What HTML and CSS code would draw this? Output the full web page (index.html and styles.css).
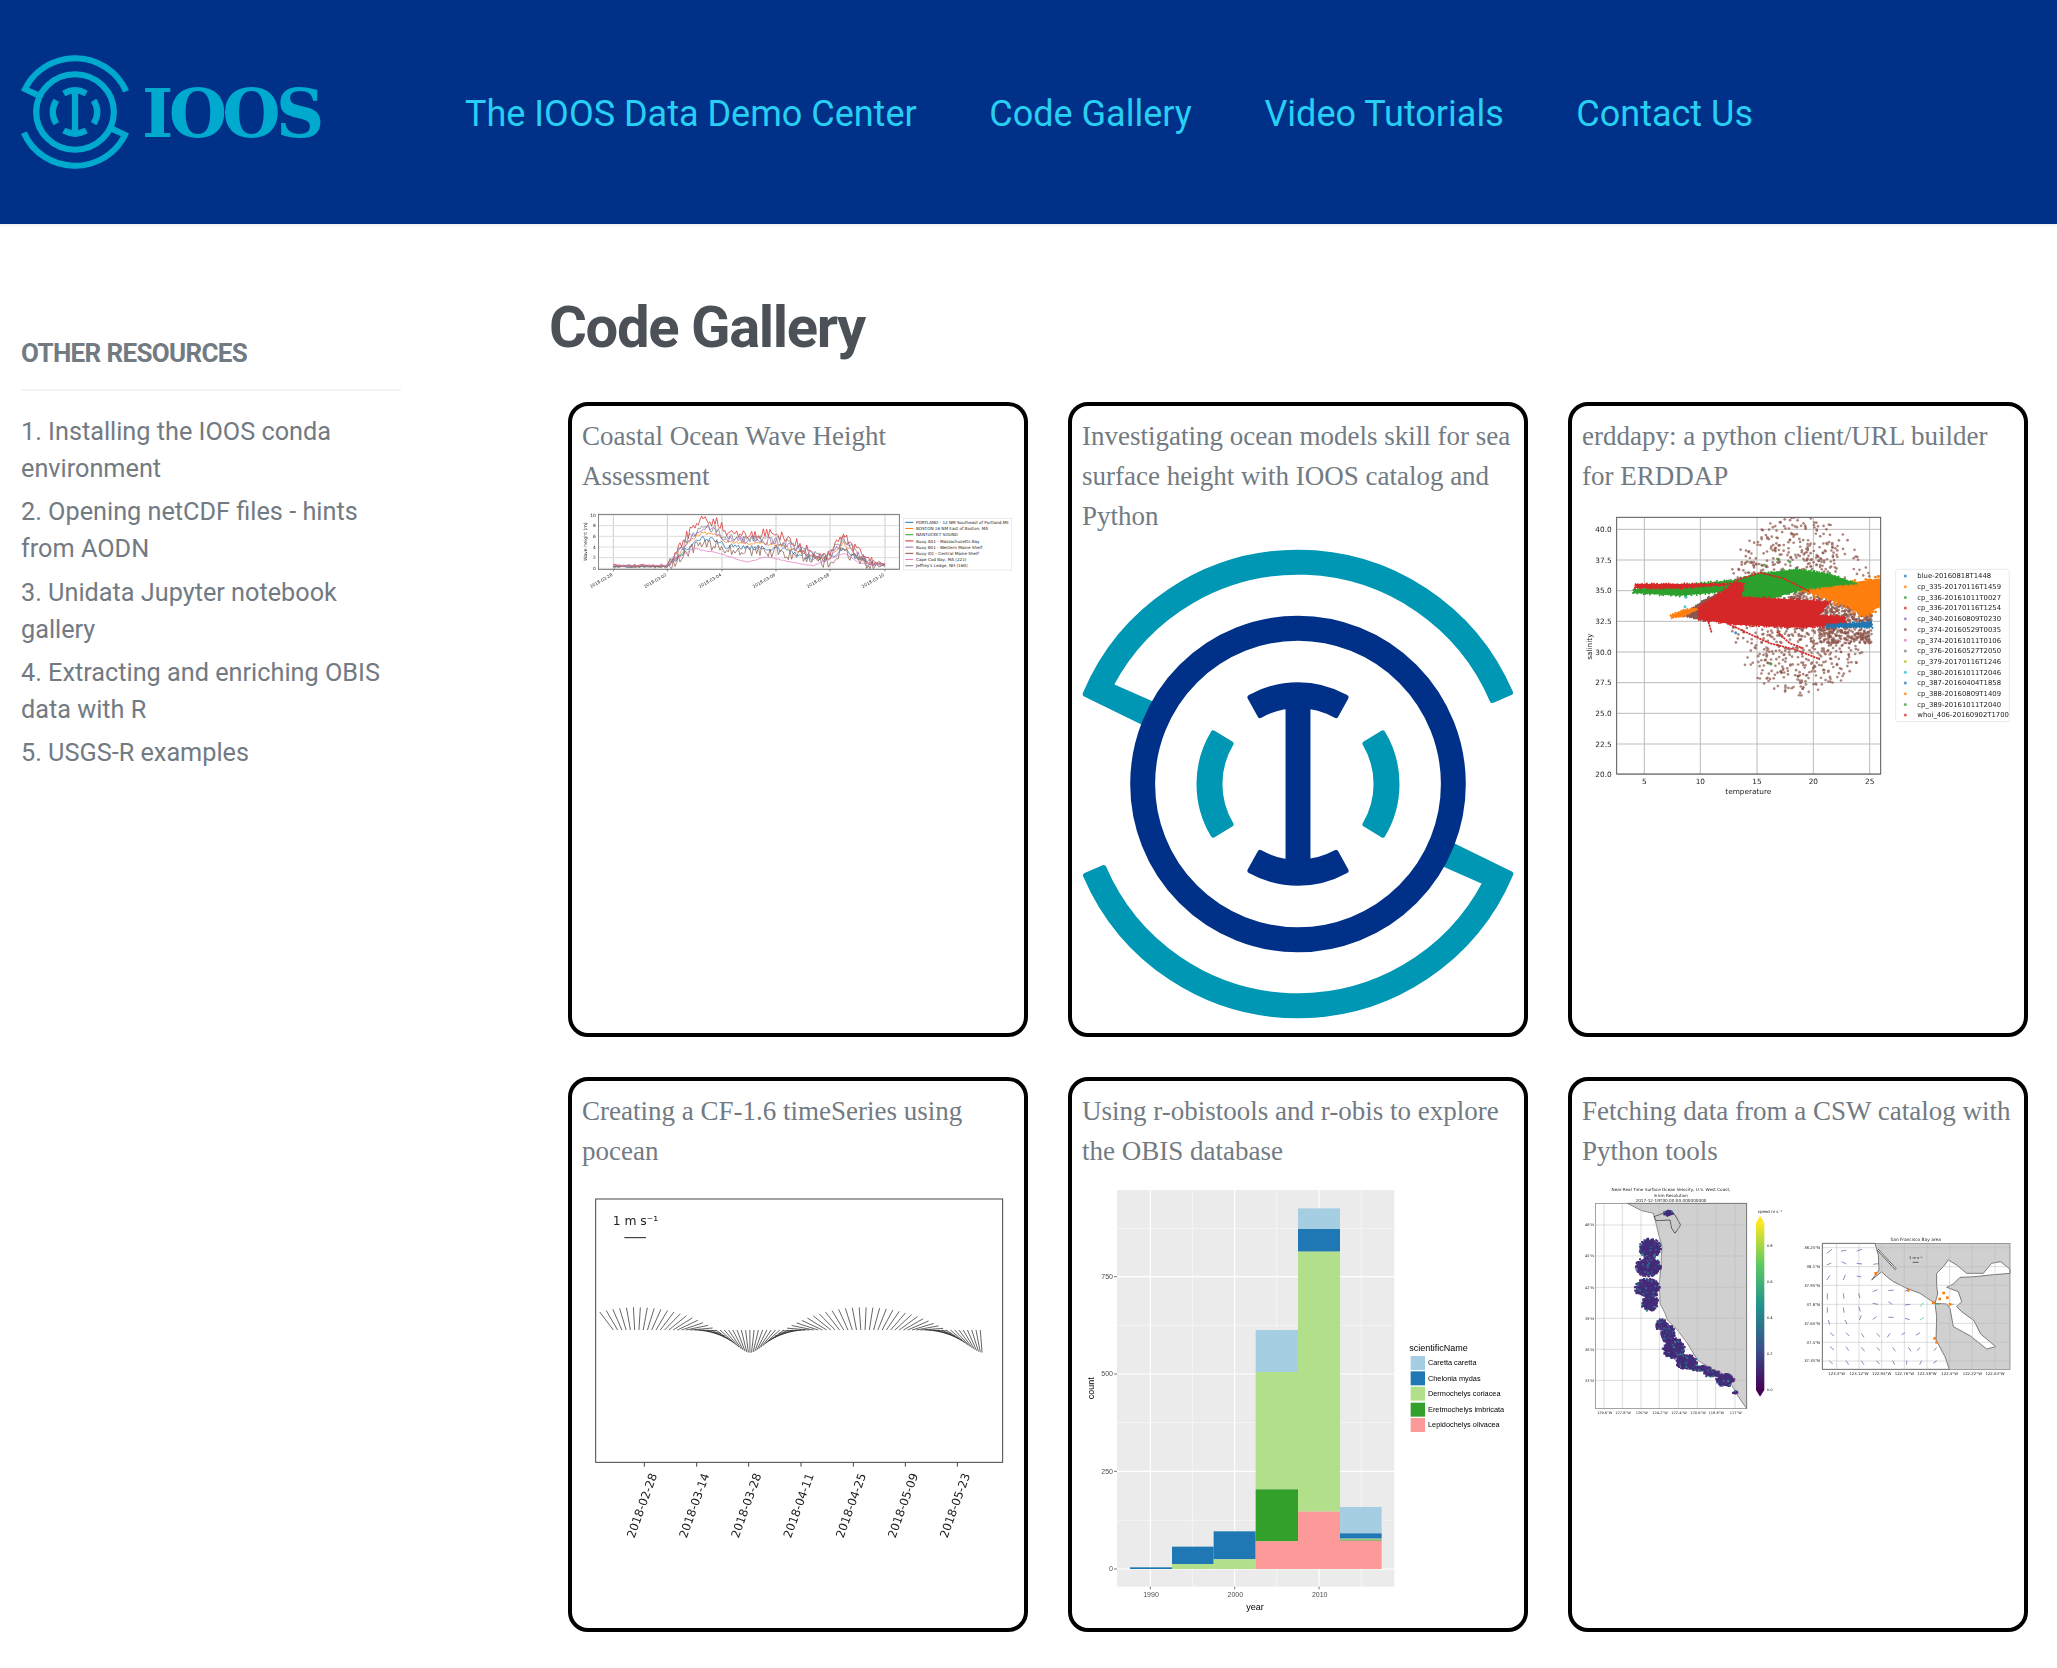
FILE: index.html
```html
<!DOCTYPE html>
<html lang="en">
<head>
<meta charset="utf-8">
<title>Code Gallery - IOOS</title>
<link rel="stylesheet" href="styles.css">
</head>
<body>
<svg class="defs" width="0" height="0" aria-hidden="true">
  <symbol id="ioos-mark" viewBox="-650 -705 1300 1410" preserveAspectRatio="none">
    <g class="mark-outer">
      <path d="M639 -274A695 695 0 0 0 -640 -270L-440 -172L-412 -228L-564 -295A637 637 0 0 1 585 -251Z"/>
      <path transform="rotate(180)" d="M639 -274A695 695 0 0 0 -640 -270L-440 -172L-412 -228L-564 -295A637 637 0 0 1 585 -251Z"/>
      <path d="M-255 -153A297 297 0 0 0 -255 153L-202 121A236 236 0 0 1 -202 -121Z"/>
      <path transform="rotate(180)" d="M-255 -153A297 297 0 0 0 -255 153L-202 121A236 236 0 0 1 -202 -121Z"/>
    </g>
    <circle class="mark-ring" r="467.5"/>
    <g class="mark-inner">
      <rect x="-37.5" y="-240" width="75" height="480"/>
      <path d="M-144 -260A297 297 0 0 1 144 -260L114 -206A236 236 0 0 0 -114 -206Z"/>
      <path transform="rotate(180)" d="M-144 -260A297 297 0 0 1 144 -260L114 -206A236 236 0 0 0 -114 -206Z"/>
    </g>
  </symbol>
</svg>

<header class="site-header">
  <a class="brand" href="#">
    <svg class="brand-mark"><use href="#ioos-mark"/></svg>
    <span class="brand-name">IOOS</span>
  </a>
  <nav class="site-nav">
    <a href="#">The IOOS Data Demo Center</a>
    <a href="#">Code Gallery</a>
    <a href="#">Video Tutorials</a>
    <a href="#">Contact Us</a>
  </nav>
</header>

<div class="page">
  <aside class="sidebar">
    <h4 class="sidebar-title">OTHER RESOURCES</h4>
    <ul class="sidebar-list">
      <li><a href="#">1. Installing the IOOS conda environment</a></li>
      <li><a href="#">2. Opening netCDF files - hints from AODN</a></li>
      <li><a href="#">3. Unidata Jupyter notebook gallery</a></li>
      <li><a href="#">4. Extracting and enriching OBIS data with R</a></li>
      <li><a href="#">5. USGS-R examples</a></li>
    </ul>
  </aside>
  <main class="content">
    <h1 class="page-title">Code Gallery</h1>
    <div class="gallery">
      <article class="card">
        <h3 class="card-title">Coastal Ocean Wave Height Assessment</h3>
        <svg class="plot plot-soft" id="wave" viewBox="66 327 1296 270"></svg>
      </article>
      <article class="card">
        <h3 class="card-title">Investigating ocean models skill for sea surface height with IOOS catalog and Python</h3>
        <svg class="card-logo"><use href="#ioos-mark"/></svg>
      </article>
      <article class="card">
        <h3 class="card-title">erddapy: a python client/URL builder for ERDDAP</h3>
        <svg class="plot" id="scatter" viewBox="36 27 1296 894"></svg>
      </article>
      <article class="card">
        <h3 class="card-title">Creating a CF-1.6 timeSeries using pocean</h3>
        <svg class="plot" id="quiver" viewBox="36 12 1296 1095"></svg>
      </article>
      <article class="card">
        <h3 class="card-title">Using r-obistools and r-obis to explore the OBIS database</h3>
        <svg class="plot" id="hist" viewBox="36 12 1296 1290"></svg>
      </article>
      <article class="card">
        <h3 class="card-title">Fetching data from a CSW catalog with Python tools</h3>
        <svg class="plot plot-soft" id="maps" viewBox="36 42 1296 735"></svg>
      </article>
    </div>
  </main>
</div>
<script src="script.js"></script>
</body>
</html>
```
FILE: styles.css
```css
* { box-sizing: border-box; }
html, body { margin: 0; padding: 0; background: #fff; }
body { font-family: Roboto, "Liberation Sans", sans-serif; color: #6c757d; }
a { color: inherit; text-decoration: none; }
.defs { position: absolute; }

.site-header { height: 224px; background: #003087; display: flex; align-items: center; }
.brand { width: 465px; padding-left: 21px; display: flex; align-items: center; gap: 13px; color: #00a9ce; }
.brand-mark { width: 108px; height: 114px; --outer: #00a9ce; --ring: #00a9ce; --inner: #00a9ce; flex: none; }
.brand-name { font-family: "DejaVu Serif", serif; font-weight: 700; font-size: 67px; letter-spacing: -4.7px; line-height: 1; padding-top: 2px; }
.site-nav { display: flex; gap: 72.6px; font-size: 36px; color: #27cff5; padding-top: 4px; }

.mark-outer path { fill: var(--outer); stroke: var(--outer); stroke-width: 16; stroke-linejoin: round; }
.mark-ring { fill: none; stroke: var(--ring); stroke-width: 75; }
.mark-inner rect { fill: var(--inner); }
.mark-inner path { fill: var(--inner); stroke: var(--inner); stroke-width: 16; stroke-linejoin: round; }

.page { display: flex; align-items: flex-start; border-top: 2px solid #f3f4f5; }
.sidebar { width: 548px; flex: none; padding: 109px 147px 0 21px; color: #727a82; }
.sidebar-title { margin: 0; padding-bottom: 18px; font-size: 26px; font-weight: 700; letter-spacing: -0.65px; line-height: 36px; border-bottom: 2px solid #f3f4f5; }
.sidebar-list { list-style: none; margin: 22px 0 0; padding: 0; font-size: 25.25px; line-height: 37px; }
.sidebar-list li { margin-bottom: 6.3px; }

.content { flex: 1; min-width: 0; }
.page-title { margin: 63px 0 0 1px; font-size: 58px; line-height: 76px; font-weight: 700; letter-spacing: -1.4px; color: #4b5157; }
.gallery { margin: 37px 0 0 20px; display: grid; grid-template-columns: repeat(3, 460px); gap: 40px; align-items: stretch; }
.card { border: 4px solid #000; border-radius: 20px; padding: 10px 10px 14px; background: #fff; }
.card-title { margin: 0 0 13px; font-family: "Liberation Serif", "Times New Roman", serif; font-weight: 400; font-size: 27px; line-height: 40px; color: #727a82; }
.plot { display: block; width: 100%; height: auto; filter: blur(0.45px); }
.plot-soft { filter: blur(0.6px); }
.card-logo { display: block; width: 432px; height: 470px; --outer: #0097b5; --ring: #003087; --inner: #003087; }
.card-logo, .brand-mark { overflow: visible; }

.t-mpl { font-family: "DejaVu Sans", sans-serif; fill: #222; }
.t-gg { font-family: "Liberation Sans", sans-serif; fill: #4d4d4d; }
.t-gg-dark { font-family: "Liberation Sans", sans-serif; fill: #000; }
```
FILE: script.js
```js
(function () {
  var NS = "http://www.w3.org/2000/svg";
  var seed = 12345;
  function rnd() {
    seed |= 0; seed = (seed + 0x6d2b79f5) | 0;
    var t = Math.imul(seed ^ (seed >>> 15), 1 | seed);
    t = (t + Math.imul(t ^ (t >>> 7), 61 | t)) ^ t;
    return ((t ^ (t >>> 14)) >>> 0) / 4294967296;
  }
  function el(parent, tag, attrs, text) {
    var n = document.createElementNS(NS, tag);
    for (var k in attrs) n.setAttribute(k, attrs[k]);
    if (text != null) n.textContent = text;
    parent.appendChild(n);
    return n;
  }
  function line(p, x1, y1, x2, y2, stroke, w) {
    return el(p, "line", { x1: x1, y1: y1, x2: x2, y2: y2, stroke: stroke, "stroke-width": w });
  }
  function rect(p, x, y, x2, y2, fill, extra) {
    var a = { x: x, y: y, width: x2 - x, height: y2 - y, fill: fill };
    for (var k in extra || {}) a[k] = extra[k];
    return el(p, "rect", a);
  }
  function text(p, x, y, size, str, cls, extra) {
    var a = { x: x, y: y, "font-size": size, "class": cls || "t-mpl" };
    for (var k in extra || {}) a[k] = extra[k];
    return el(p, "text", a, str);
  }
  function poly(p, pts, fill, extra) {
    var a = { points: pts.map(function (q) { return q.join(","); }).join(" "), fill: fill };
    for (var k in extra || {}) a[k] = extra[k];
    return el(p, "polygon", a);
  }
  function polyline(p, pts, stroke, w, extra) {
    var a = { points: pts.map(function (q) { return q.map(function (v) { return v.toFixed(1); }).join(","); }).join(" "), fill: "none", stroke: stroke, "stroke-width": w, "stroke-linejoin": "round" };
    for (var k in extra || {}) a[k] = extra[k];
    return el(p, "polyline", a);
  }
  function interp(pts, x) {
    for (var i = 1; i < pts.length; i++) {
      if (x <= pts[i][0]) {
        var a = pts[i - 1], b = pts[i];
        return a[1] + (b[1] - a[1]) * (x - a[0]) / (b[0] - a[0]);
      }
    }
    return pts[pts.length - 1][1];
  }
  /* a filled mass of overlapping markers: polygon body with a dotted, irregular edge */
  function mass(p, pts, fill, jitter, r) {
    poly(p, pts, fill);
    for (var i = 0; i < pts.length; i++) {
      var a = pts[i], b = pts[(i + 1) % pts.length];
      var len = Math.hypot(b[0] - a[0], b[1] - a[1]);
      for (var d = 0; d < len; d += 7) {
        var t = d / len;
        el(p, "circle", { cx: a[0] + (b[0] - a[0]) * t + (rnd() - 0.5) * jitter, cy: a[1] + (b[1] - a[1]) * t + (rnd() - 0.5) * jitter, r: r, fill: fill });
      }
    }
  }
  var tab = ["#1f77b4", "#ff7f0e", "#2ca02c", "#d62728", "#9467bd", "#8c564b", "#e377c2", "#7f7f7f", "#bcbd22", "#17becf"];

  /* ---------- wave height time series ---------- */
  (function () {
    var s = document.getElementById("wave");
    [160, 322, 486, 648, 810, 975].forEach(function (x, i) {
      line(s, x, 343, x, 508, "#ccc", 3);
      line(s, x, 508, x, 514, "#444", 2);
      text(s, x - 1, 527, 13, ["2018-02-28", "2018-03-02", "2018-03-04", "2018-03-06", "2018-03-08", "2018-03-10"][i], "t-mpl", { "text-anchor": "end", transform: "rotate(-30 " + (x - 1) + " 527)" });
    });
    [[505, "0"], [473, "2"], [441, "4"], [409, "6"], [377, "8"], [345, "10"]].forEach(function (t) {
      line(s, 115, t[0], 1018, t[0], "#ddd", 3);
      text(s, 107, t[0] + 5, 13, t[1], "t-mpl", { "text-anchor": "end" });
    });
    text(s, 82, 425, 14, "Wave height (m)", "t-mpl", { "text-anchor": "middle", transform: "rotate(-90 82 425)" });
    var env = [[160, 496], [320, 496], [345, 465], [395, 385], [425, 355], [470, 368], [500, 395], [650, 405], [700, 425], [760, 455], [800, 470], [850, 398], [880, 440], [920, 482], [975, 490]];
    var cape = [[160, 497], [320, 497], [400, 445], [480, 460], [560, 487], [620, 470], [700, 488], [760, 497], [810, 475], [855, 460], [900, 490], [975, 495]];
    var series = [[tab[0], 0.6, 8], [tab[1], 0.72, 5], [tab[2], 0.6, 1], [tab[3], 1, 16], [tab[4], 0.8, 12], [tab[5], 0.5, 18], [tab[7], 0.85, 14]];
    series.forEach(function (c, idx) {
      var pts = [];
      for (var x = 160; x <= 975; x += 5) {
        if (idx === 2 && x > 375) break;
        var b = interp(env, x);
        var amp = (b > 485 ? 0.25 : 1) * c[2];
        pts.push([x, Math.min(506, 505 - (505 - b) * c[1] + (rnd() - 0.5) * amp * 2)]);
      }
      polyline(s, pts, c[0], 2.2);
    });
    var cp = [];
    for (var x = 160; x <= 975; x += 8) cp.push([x, interp(cape, x) + (rnd() - 0.5) * 3]);
    polyline(s, cp, tab[6], 2.2);
    rect(s, 115, 343, 1018, 508, "none", { stroke: "#666", "stroke-width": 2.5 });
    rect(s, 1030, 355, 1355, 510, "#fff", { stroke: "#e5e5e5", "stroke-width": 2 });
    var names = ["PORTLAND - 12 NM Southeast of Portland,ME", "BOSTON 16 NM East of Boston, MA", "NANTUCKET SOUND", "Buoy A01 - Massachusetts Bay", "Buoy B01 - Western Maine Shelf", "Buoy I01 - Central Maine Shelf", "Cape Cod Bay, MA (221)", "Jeffrey's Ledge, NH (160)"];
    names.forEach(function (n, i) {
      var y = 367 + i * 18.6;
      line(s, 1036, y, 1060, y, tab[i], 3);
      text(s, 1068, y + 5, 12.4, n);
    });
  })();

  /* ---------- temperature / salinity scatter ---------- */
  (function () {
    var s = document.getElementById("scatter");
    var defs = el(s, "defs", {});
    var cp = el(defs, "clipPath", { id: "scatter-clip" });
    rect(cp, 140, 52, 932, 822, "#000");
    [223, 391, 561, 730, 899].forEach(function (x, i) {
      line(s, x, 52, x, 822, "#bbb", 3);
      text(s, x, 853, 22, String(5 + i * 5), "t-mpl", { "text-anchor": "middle" });
    });
    [[88, "40.0"], [180, "37.5"], [272, "35.0"], [364, "32.5"], [456, "30.0"], [548, "27.5"], [640, "25.0"], [732, "22.5"], [823, "20.0"]].forEach(function (t) {
      line(s, 140, t[0], 932, t[0], "#bbb", 3);
      text(s, 125, t[0] + 8, 22, t[1], "t-mpl", { "text-anchor": "end" });
    });
    var g = el(s, "g", { "clip-path": "url(#scatter-clip)" });
    /* sparse outer cloud: denser near the middle, thinning irregularly toward the rim */
    for (var i = 0; i < 1300; i++) {
      var a = rnd() * 6.283, r = Math.pow(rnd(), 0.85);
      var x = 690 + Math.cos(a) * r * 225, y = 315 + Math.sin(a) * r * 272;
      if (x > 905) continue;
      if (y < 235 && x > 800 && rnd() < 0.6) continue;
      if (y > 420 && x < 560 && rnd() < 0.45) continue;
      el(g, "circle", { cx: x.toFixed(1), cy: y.toFixed(1), r: 4, fill: tab[5], opacity: 0.72 });
    }
    for (i = 0; i < 500; i++) {
      el(g, "circle", { cx: (745 + rnd() * 160).toFixed(1), cy: (290 + rnd() * 140).toFixed(1), r: 4, fill: tab[5], opacity: 0.72 });
    }
    mass(g, [[340, 347], [400, 300], [480, 265], [500, 300], [420, 365]], tab[5], 6, 3);
    mass(g, [[690, 268], [860, 245], [932, 235], [932, 318], [880, 350], [835, 320], [780, 300]], tab[1], 14, 4);
    mass(g, [[303, 346], [340, 330], [395, 322], [345, 347], [305, 354]], tab[1], 4, 3);
    mass(g, [[190, 268], [500, 240], [560, 222], [680, 208], [780, 222], [858, 250], [700, 268], [600, 297], [510, 292], [510, 270], [330, 287], [190, 279]], tab[2], 6, 3);
    mass(g, [[197, 252], [490, 252], [520, 250], [330, 265], [197, 264]], tab[3], 4, 3);
    mass(g, [[385, 322], [500, 246], [520, 255], [515, 290], [780, 305], [745, 346], [825, 350], [825, 372], [700, 383], [500, 374], [388, 358]], tab[3], 6, 3);
    mass(g, [[770, 374], [905, 366], [905, 382], [770, 382]], tab[0], 5, 3);
    [[[500, 240], [570, 218], [640, 235], [720, 275]], [[415, 365], [425, 398]], [[470, 370], [600, 430], [680, 450], [750, 478]], [[620, 395], [660, 430], [700, 445]]].forEach(function (p) {
      polyline(g, p, tab[3], 5, { "stroke-dasharray": "7 2" });
    });
    [[348, 292, 9], [345, 320, 9], [497, 398, 0], [583, 195, 2], [625, 178, 2], [660, 186, 2], [603, 492, 2]].forEach(function (d) {
      el(g, "circle", { cx: d[0], cy: d[1], r: 4.5, fill: tab[d[2]], opacity: 0.8 });
    });
    rect(s, 140, 52, 932, 822, "none", { stroke: "#555", "stroke-width": 3 });
    text(s, 535, 881, 22, "temperature", "t-mpl", { "text-anchor": "middle" });
    text(s, 66, 440, 22, "salinity", "t-mpl", { "text-anchor": "middle", transform: "rotate(-90 66 440)" });
    rect(s, 977, 208, 1318, 665, "#fff", { stroke: "#e4e4e4", "stroke-width": 2.5, rx: 6 });
    ["blue-20160818T1448", "cp_335-20170116T1459", "cp_336-20161011T0027", "cp_336-20170116T1254", "cp_340-20160809T0230", "cp_374-20160529T0035", "cp_374-20161011T0106", "cp_376-20160527T2050", "cp_379-20170116T1246", "cp_380-20161011T2046", "cp_387-20160404T1858", "cp_388-20160809T1409", "cp_389-20161011T2040", "whoi_406-20160902T1700"].forEach(function (n, i) {
      var y = 228 + i * 32.1;
      el(s, "circle", { cx: 1006, cy: y, r: 4.5, fill: tab[i % 10], opacity: 0.75 });
      text(s, 1042, y + 7, 20.6, n);
    });
  })();

  /* ---------- current-vector time series ---------- */
  (function () {
    var s = document.getElementById("quiver");
    var labels = ["2018-02-28", "2018-03-14", "2018-03-28", "2018-04-11", "2018-04-25", "2018-05-09", "2018-05-23"];
    [223, 380, 536, 693, 850, 1006, 1162].forEach(function (x, i) {
      line(s, x, 847, x, 860, "#444", 3);
      var ax = x + 39, ay = 885;
      text(s, ax, ay, 35, labels[i], "t-mpl", { "text-anchor": "end", transform: "rotate(-70 " + ax + " " + ay + ")" });
    });
    for (var x = 130; x <= 1242; x += 12.8) {
      var deg;
      if (x < 540) deg = 90 - 180 * (x - 200) / 340;
      else if (x < 880) deg = -90 - 180 * (x - 540) / 340;
      else deg = -270 - 180 * (x - 880) / 360;
      var r = deg * Math.PI / 180;
      line(s, x, 450, x + 68 * Math.cos(r), 450 - 68 * Math.sin(r), "#222", 2.1);
    }
    rect(s, 77, 57, 1298, 847, "none", { stroke: "#444", "stroke-width": 3 });
    text(s, 128, 135, 37, "1 m s\u207B\u00B9");
    line(s, 163, 173, 228, 173, "#222", 3);
  })();

  /* ---------- ggplot stacked histogram ---------- */
  (function () {
    var s = document.getElementById("hist");
    rect(s, 141, 30, 973, 1220, "#ebebeb");
    [145, 436, 728, 1021].forEach(function (y) { line(s, 141, y, 973, y, "#fff", 1.5); });
    [367, 620, 873].forEach(function (x) { line(s, x, 30, x, 1220, "#fff", 1.5); });
    [290, 582, 874, 1167].forEach(function (y) { line(s, 141, y, 973, y, "#fff", 3.5); });
    [241, 494, 747].forEach(function (x) { line(s, x, 30, x, 1220, "#fff", 3.5); });
    var c = { a: "#a6cee3", b: "#1f78b4", g: "#b2df8a", d: "#33a02c", p: "#fb9a99" };
    [[180, 306, 1162, 1167, c.b], [306, 431, 1100, 1152, c.b], [306, 431, 1152, 1167, c.g], [431, 557, 1054, 1138, c.b], [431, 557, 1138, 1167, c.g],
     [557, 684, 450, 576, c.a], [557, 684, 576, 928, c.g], [557, 684, 928, 1084, c.d], [557, 684, 1084, 1167, c.p],
     [684, 810, 85, 147, c.a], [684, 810, 147, 215, c.b], [684, 810, 215, 995, c.g], [684, 810, 995, 1167, c.p],
     [810, 935, 981, 1060, c.a], [810, 935, 1060, 1076, c.b], [810, 935, 1076, 1079, c.g], [810, 935, 1079, 1082, c.d], [810, 935, 1082, 1167, c.p]
    ].forEach(function (b) { rect(s, b[0], b[2], b[1], b[3], b[4]); });
    [[290, "750"], [582, "500"], [874, "250"], [1167, "0"]].forEach(function (t) {
      line(s, 132, t[0], 141, t[0], "#333", 2);
      text(s, 129, t[0] + 7, 21, t[1], "t-gg", { "text-anchor": "end" });
    });
    [[241, "1990"], [494, "2000"], [747, "2010"]].forEach(function (t) {
      line(s, t[0], 1220, t[0], 1228, "#333", 2);
      text(s, t[0] + 2, 1250, 21, t[1], "t-gg", { "text-anchor": "middle" });
    });
    text(s, 555, 1289, 27, "year", "t-gg-dark", { "text-anchor": "middle" });
    text(s, 72, 625, 27, "count", "t-gg-dark", { "text-anchor": "middle", transform: "rotate(-90 72 625)" });
    text(s, 1018, 514, 27, "scientificName", "t-gg-dark");
    [[528, 570, c.a, "Caretta caretta"], [574, 616, c.b, "Chelonia mydas"], [620, 662, c.g, "Dermochelys coriacea"], [668, 710, c.d, "Eretmochelys imbricata"], [714, 756, c.p, "Lepidochelys olivacea"]].forEach(function (e) {
      rect(s, 1022, e[0], 1065, e[1], e[2]);
      text(s, 1074, e[0] + 28, 22, e[3], "t-gg-dark");
    });
  })();

  /* ---------- west coast velocity maps ---------- */
  (function () {
    var s = document.getElementById("maps");
    var defs = el(s, "defs", {});
    var grad = el(defs, "linearGradient", { id: "viridis", x1: 0, y1: 1, x2: 0, y2: 0 });
    ["#440154", "#3b528b", "#21918c", "#5ec962", "#fde725"].forEach(function (c, i) { el(grad, "stop", { offset: i * 25 + "%", "stop-color": c }); });

    /* left map */
    rect(s, 77, 100, 530, 716, "#fff");
    poly(s, [[172, 100], [215, 122], [250, 130], [256, 152], [265, 190], [276, 230], [272, 300], [268, 340], [270, 400], [285, 430], [292, 450], [322, 480], [352, 520], [382, 570], [430, 600], [482, 640], [505, 680], [530, 716], [530, 100]], "#d0d0d0", { stroke: "#333", "stroke-width": 1.5 });
    poly(s, [[252, 140], [300, 122], [315, 135], [332, 165], [315, 190], [305, 175], [300, 150], [258, 152]], "#ccc", { stroke: "#222", "stroke-width": 2 });
    [102, 157, 213, 268, 325, 382, 437, 495].forEach(function (x, i) {
      line(s, x, 100, x, 716, "#bbb", 1.5);
      text(s, x + 2, 733, 10.7, ["129.6\u00B0W", "127.8\u00B0W", "126\u00B0W", "124.2\u00B0W", "122.4\u00B0W", "120.6\u00B0W", "118.8\u00B0W", "117\u00B0W"][i], "t-mpl", { "text-anchor": "middle" });
    });
    [[165, "48\u00B0N"], [258, "45\u00B0N"], [352, "42\u00B0N"], [445, "39\u00B0N"], [538, "36\u00B0N"], [631, "33\u00B0N"]].forEach(function (t) {
      line(s, 77, t[0], 530, t[0], "#bbb", 1.5);
      text(s, 72, t[0] + 4, 10.7, t[1], "t-mpl", { "text-anchor": "end" });
    });
    var blobs = [[240, 235, 33, 30], [235, 290, 38, 30], [232, 355, 38, 30], [240, 400, 26, 24], [275, 465, 18, 18], [295, 490, 22, 28], [312, 535, 34, 32], [350, 575, 34, 22], [390, 595, 32, 10], [425, 610, 24, 12], [465, 630, 28, 20], [495, 668, 8, 6], [295, 130, 14, 9]];
    blobs.forEach(function (b) {
      el(s, "ellipse", { cx: b[0], cy: b[1], rx: b[2] * 0.88, ry: b[3] * 0.88, fill: "#45307c" });
      var n = b[2] * b[3] * 0.16;
      for (var i = 0; i < n; i++) {
        var a = rnd() * 6.283, r = Math.sqrt(rnd());
        var v = rnd();
        var col = v < 0.55 ? "#482878" : v < 0.85 ? "#3e2f78" : v < 0.97 ? "#31688e" : "#1f968b";
        var px = b[0] + Math.cos(a) * r * b[2], py = b[1] + Math.sin(a) * r * b[3];
        rect(s, px - 3, py - 3, px + 3, py + 3, col);
      }
    });
    rect(s, 77, 100, 530, 716, "none", { stroke: "#777", "stroke-width": 2 });
    ["Near-Real Time Surface Ocean Velocity, U.S. West Coast,", "6 km Resolution", "2017-12-19T00:00:00.000000000"].forEach(function (t, i) {
      text(s, 303, 64 + i * 16, 12.6, t, "t-mpl", { "text-anchor": "middle" });
    });
    rect(s, 558, 158, 583, 660, "url(#viridis)");
    poly(s, [[558, 158], [570, 137], [583, 158]], "#fde725");
    poly(s, [[558, 660], [570, 680], [583, 660]], "#440154");
    text(s, 600, 129, 12, "speed m s\u207B\u00B9", "t-mpl", { "text-anchor": "middle" });
    [[231, "0.8"], [339, "0.6"], [447, "0.4"], [554, "0.2"], [662, "0.0"]].forEach(function (t) { text(s, 590, t[0], 11, t[1]); });

    /* right map */
    rect(s, 757, 220, 1320, 598, "#d0d0d0");
    poly(s, [[757, 220], [915, 220], [925, 255], [927, 300], [905, 330], [935, 305], [950, 320], [970, 335], [1010, 355], [1050, 370], [1095, 400], [1100, 440], [1098, 510], [1125, 560], [1138, 598], [757, 598]], "#fff", { stroke: "#444", "stroke-width": 2 });
    line(s, 922, 238, 978, 298, "#444", 6);
    line(s, 922, 238, 978, 298, "#fff", 3);
    poly(s, [[1095, 400], [1103, 372], [1100, 345], [1100, 310], [1120, 290], [1135, 270], [1160, 285], [1190, 310], [1240, 310], [1265, 280], [1292, 275], [1320, 298], [1320, 310], [1260, 315], [1215, 320], [1170, 322], [1150, 342], [1130, 352], [1165, 365], [1175, 395], [1160, 410], [1175, 425], [1212, 452], [1232, 492], [1277, 530], [1250, 537], [1200, 497], [1150, 470], [1140, 415], [1130, 402]], "#fff", { stroke: "#444", "stroke-width": 2 });
    [800, 867, 935, 1003, 1071, 1139, 1207, 1275].forEach(function (x, i) {
      line(s, x, 220, x, 598, "#bbb", 1.5);
      text(s, x, 616, 11.6, ["123.3\u00B0W", "123.12\u00B0W", "122.94\u00B0W", "122.76\u00B0W", "122.58\u00B0W", "122.4\u00B0W", "122.22\u00B0W", "122.04\u00B0W"][i], "t-mpl", { "text-anchor": "middle" });
    });
    [[233, "38.25\u00B0N"], [290, "38.1\u00B0N"], [346, "37.95\u00B0N"], [403, "37.8\u00B0N"], [460, "37.65\u00B0N"], [517, "37.5\u00B0N"], [573, "37.35\u00B0N"]].forEach(function (t) {
      line(s, 757, t[0], 1320, t[0], "#bbb", 1.5);
      text(s, 750, t[0] + 4, 11.6, t[1], "t-mpl", { "text-anchor": "end" });
    });
    [[770, 250, 16, -12], [813, 243, 16, -2], [860, 243, 16, -5], [910, 283, 16, -2], [770, 285, 14, -6], [815, 275, 14, 7], [860, 280, 16, 2], [770, 330, 10, -14], [820, 330, 6, -16], [860, 318, 14, 3],
     [772, 370, 0, 18], [820, 370, 2, 16], [866, 370, 4, 14], [908, 365, 14, -6], [955, 362, 16, -2], [1005, 365, 10, -8], [772, 412, 0, 16], [820, 412, 2, 16], [866, 410, 5, 14], [908, 400, 16, 3], [955, 395, 12, 8], [1005, 405, 16, -2],
     [775, 450, 4, 14], [825, 450, 6, 12], [868, 450, 6, -14], [908, 448, 12, -8], [955, 442, 16, 0], [1005, 445, 14, 4], [780, 488, 12, 10], [828, 488, 10, 10], [874, 490, 8, 12], [920, 490, 10, 10], [960, 490, -8, 12], [1005, 488, -10, 6], [1050, 488, -12, 8],
     [780, 530, 12, 10], [828, 530, 8, 12], [874, 532, 10, 12], [920, 532, 10, 10], [968, 532, 8, 12], [1015, 532, 8, 12], [1050, 532, -8, 10], [1100, 532, -8, 10],
     [778, 572, 10, 10], [828, 572, 8, 12], [874, 572, 8, 12], [920, 572, 8, 10], [968, 572, 6, 12], [1010, 572, 0, 12], [1055, 572, -6, 12], [1100, 572, -10, 8]
    ].forEach(function (a) { line(s, a[0], a[1], a[0] + a[2], a[1] + a[3], "#5b4a9f", 2); });
    [[1050, 410, 10, -12], [1050, 450, 12, -8], [1095, 403, 14, 0], [1140, 403, 12, 0]].forEach(function (a) { line(s, a[0], a[1], a[0] + a[2], a[1] + a[3], "#35b779", 2); });
    [[917, 310], [1015, 361], [1090, 398], [1109, 387], [1121, 369], [1132, 383], [1140, 403], [1094, 505], [1100, 517]].forEach(function (d) {
      rect(s, d[0] - 4, d[1] - 4, d[0] + 4, d[1] + 4, "#ff7f0e");
    });
    rect(s, 757, 220, 1320, 598, "none", { stroke: "#777", "stroke-width": 2 });
    text(s, 1037, 214, 13, "San Francisco Bay area", "t-mpl", { "text-anchor": "middle" });
    text(s, 1037, 268, 11, "1 m s\u207B\u00B9", "t-mpl", { "text-anchor": "middle" });
    line(s, 1028, 277, 1046, 277, "#222", 2);
  })();
})();
```
